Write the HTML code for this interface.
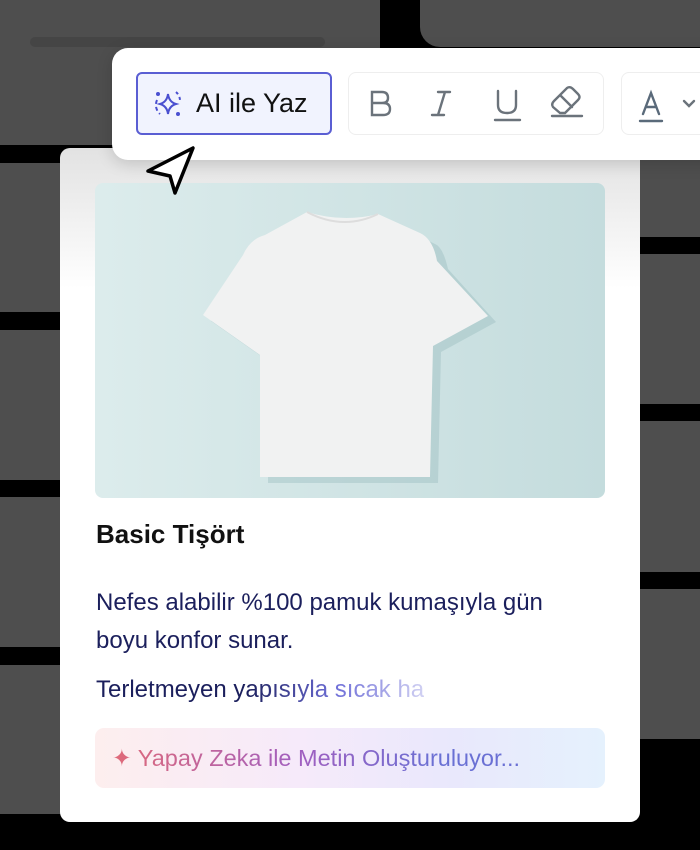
<!DOCTYPE html>
<html><head><meta charset="utf-8"><style>
*{margin:0;padding:0;box-sizing:border-box}
body{width:700px;height:850px;background:#000;position:relative;overflow:hidden;font-family:"Liberation Sans",Arial,sans-serif}
.c{position:absolute;background:#4e4e4e;border-radius:20px}
.l{position:absolute;background:#454545;height:10px;border-radius:5px}
</style></head><body>
<div class="c" style="left:-40px;top:-30px;width:420px;height:175px"></div>
<div class="l" style="left:30px;top:37px;width:295px"></div>
<div class="c" style="left:420px;top:-30px;width:320px;height:77px"></div>
<div class="c" style="left:-40px;top:163px;width:140px;height:149px"></div>
<div class="c" style="left:-40px;top:330px;width:140px;height:150px"></div>
<div class="c" style="left:-40px;top:497px;width:140px;height:150px"></div>
<div class="c" style="left:-40px;top:665px;width:140px;height:149px"></div>
<div class="c" style="left:600px;top:150px;width:140px;height:87px"></div>
<div class="c" style="left:600px;top:254px;width:140px;height:150px"></div>
<div class="c" style="left:600px;top:421px;width:140px;height:151px"></div>
<div class="c" style="left:600px;top:589px;width:140px;height:150px"></div>

<div style="position:absolute;left:60px;top:148px;width:580px;height:674px;background:linear-gradient(#e2e2e2,#fff 140px);border-radius:10px"></div>
<div style="position:absolute;left:95px;top:183px;width:510px;height:315px;border-radius:8px;overflow:hidden;background:linear-gradient(90deg,#dcecec,#c4dcdd)">
<svg width="510" height="315" viewBox="0 0 510 315">
<path d="M212 29 Q248 40 283 31 L332 55 Q340 58 345 80 L393 133 L338 163 L335 294 L165 294 L165 172 L108 132 L150 70 Q155 56 165 53 Z" fill="#8fb5b6" opacity=".35" transform="translate(8,6)"/>
<path d="M212 29 Q248 40 283 31 L325 50 Q338 56 342 78 L393 133 L338 163 L335 294 L165 294 L165 172 L108 132 L148 72 Q155 56 170 52 Z" fill="#f1f2f2"/>
<path d="M212 29 Q248 48 283 31" fill="none" stroke="#ddd" stroke-width="2"/>
</svg></div>

<div style="position:absolute;left:96px;top:519px;font-size:26px;font-weight:600;color:#111">Basic Tişört</div>
<div style="position:absolute;left:96px;top:584px;font-size:24px;line-height:38px;color:#1b1f5c;width:505px">Nefes alabilir %100 pamuk kumaşıyla gün boyu konfor sunar.</div>
<div style="position:absolute;left:96px;top:675px;font-size:24px;line-height:30px;background:linear-gradient(90deg,#1b1f5c 150px,#6f6fd8 240px,#fff 370px);-webkit-background-clip:text;background-clip:text;color:transparent">Terletmeyen yapısıyla sıcak ha</div>
<div style="position:absolute;left:95px;top:728px;width:510px;height:60px;border-radius:9px;background:linear-gradient(90deg,#fdeeee,#f6eafa 40%,#e9e8fc 70%,#e5f1fd)"></div>
<div style="position:absolute;left:112px;top:743px;font-size:23.5px;line-height:30px;background:linear-gradient(90deg,#e06a78,#a25fbf 45%,#6a70d4 80%);-webkit-background-clip:text;background-clip:text;color:transparent">✦ Yapay Zeka ile Metin Oluşturuluyor...</div>

<div style="position:absolute;left:112px;top:48px;width:620px;height:112px;background:#fff;border-radius:16px;box-shadow:0 4px 16px rgba(0,0,0,.15)"></div>
<div style="position:absolute;left:136px;top:72px;width:196px;height:63px;border:2px solid #5a5ed3;border-radius:6px;background:#f1f3fe"></div>
<svg style="position:absolute;left:150px;top:86px" width="36" height="36" viewBox="0 0 36 36" fill="none" stroke="#4a4fd0" stroke-width="2">
<path d="M18 8 Q19 16 26 18 Q19 20 18 28 Q17 20 10 18 Q17 16 18 8Z"/>
<path d="M7 14 A12 12 0 0 0 10 28" stroke-dasharray="4 3"/><path d="M26 6 A12 12 0 0 1 30 16" stroke-dasharray="3 3"/>
<circle cx="8" cy="8" r="1" fill="#4a4fd0"/><circle cx="28" cy="28" r="1" fill="#4a4fd0"/></svg>
<div style="position:absolute;left:196px;top:88px;font-size:27px;color:#111">AI ile Yaz</div>
<div style="position:absolute;left:348px;top:72px;width:256px;height:63px;border:1.5px solid #eee;border-radius:8px"></div>
<div style="position:absolute;left:621px;top:72px;width:100px;height:63px;border:1.5px solid #eee;border-radius:8px"></div>
<svg style="position:absolute;left:348px;top:72px" width="352" height="63" viewBox="0 0 352 63" fill="none" stroke="#6b737b" stroke-width="2.4" stroke-linecap="round">
<path d="M24 20 H34 Q40 20 40 26 Q40 31 34 31 H24 Z M24 31 H35 Q42 31 42 37 Q42 43 35 43 H24 Z"/>
<path d="M90 20 H102 M84 43 H96 M97 20 L90 43"/>
<path d="M150 19 V33 Q150 41 159 41 Q168 41 168 33 V19 M147 48 H172"/>
<path d="M212 41 L205 35 Q203 32 206 29 L219 16 Q222 14 225 17 L230 22 Q233 25 230 28 L217 41 Z M212 23 L224 35 M204 44 H234"/>
<path d="M295 42 L303 21 L311 42 M298 35 H308 M292 49 H314" stroke="#5a6a7a"/>
<path d="M336 29 L341 34 L346 29"/>
</svg>
<svg style="position:absolute;left:143px;top:140px" width="60" height="60" viewBox="0 0 60 60">
<path d="M5 31 L50 8 L32 53 L27 36 Z" fill="#fff" stroke="#000" stroke-width="3.5" stroke-linejoin="round"/></svg>
</body></html>
